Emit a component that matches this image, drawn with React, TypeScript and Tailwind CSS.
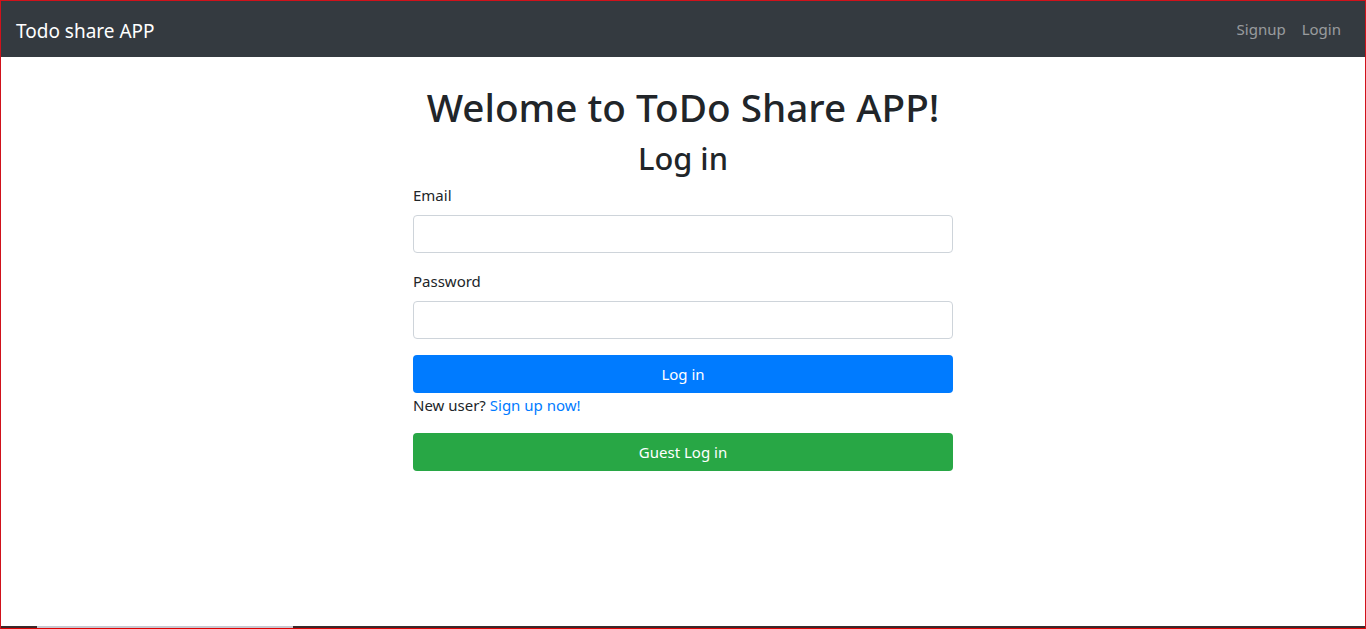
import { useState } from "react";

export default function App() {
  const [email, setEmail] = useState("");
  const [password, setPassword] = useState("");

  return (
    <div
      className="h-[629px] flex flex-col overflow-hidden bg-white text-[#212529] border-t border-l border-r border-[#d0121b]"
      style={{ fontFamily: '"Noto Sans", "Open Sans", Roboto, sans-serif' }}
    >
      {/* navbar */}
      <nav className="h-[56px] shrink-0 bg-[#343a40] flex items-center justify-between pl-[15px] pr-[16px]">
        <a href="#" className="text-white text-[19px] leading-[30px] mt-[3px]">
          Todo share APP
        </a>
        <div className="flex mt-px">
          <a href="#" className="px-2 text-[15px] text-white/50">Signup</a>
          <a href="#" className="px-2 text-[15px] text-white/50">Login</a>
        </div>
      </nav>

      {/* main */}
      <main className="flex-1 flex flex-col items-center pt-[26px]">
        <h1 className="text-[38.7px] leading-[48px] font-medium mb-2">Welome to ToDo Share APP!</h1>
        <h2 className="text-[30.8px] leading-[38px] font-medium mb-[6px]">Log in</h2>

        <form className="w-[540px] flex flex-col" onSubmit={(e) => e.preventDefault()}>
          <div className="mb-4">
            <label className="block text-[15px] leading-6 mb-2">Email</label>
            <input
              type="email"
              value={email}
              onChange={(e) => setEmail(e.target.value)}
              className="w-full h-[38px] border border-[#ced4da] rounded px-3 outline-none"
            />
          </div>
          <div className="mb-4">
            <label className="block text-[15px] leading-6 mb-2">Password</label>
            <input
              type="password"
              value={password}
              onChange={(e) => setPassword(e.target.value)}
              className="w-full h-[38px] border border-[#ced4da] rounded px-3 outline-none"
            />
          </div>
          <button type="submit" className="h-[38px] rounded bg-[#007bff] text-white text-[15px]">
            Log in
          </button>
          <p className="text-[15px] leading-6 mb-4">
            New user? <a href="#" className="text-[#007bff]">Sign up now!</a>
          </p>
          <button type="button" className="h-[38px] rounded bg-[#28a745] text-white text-[15px]">
            Guest Log in
          </button>
        </form>
      </main>

      {/* bottom edge of the capture */}
      <div className="h-[3px] shrink-0 flex flex-col">
        <div className="h-[2px] bg-[#3a2a2c] flex">
          <div className="w-[36px]" />
          <div className="w-[256px] bg-[#c8c8d0]" />
        </div>
        <div className="h-px bg-[#e00000]" />
      </div>
    </div>
  );
}
